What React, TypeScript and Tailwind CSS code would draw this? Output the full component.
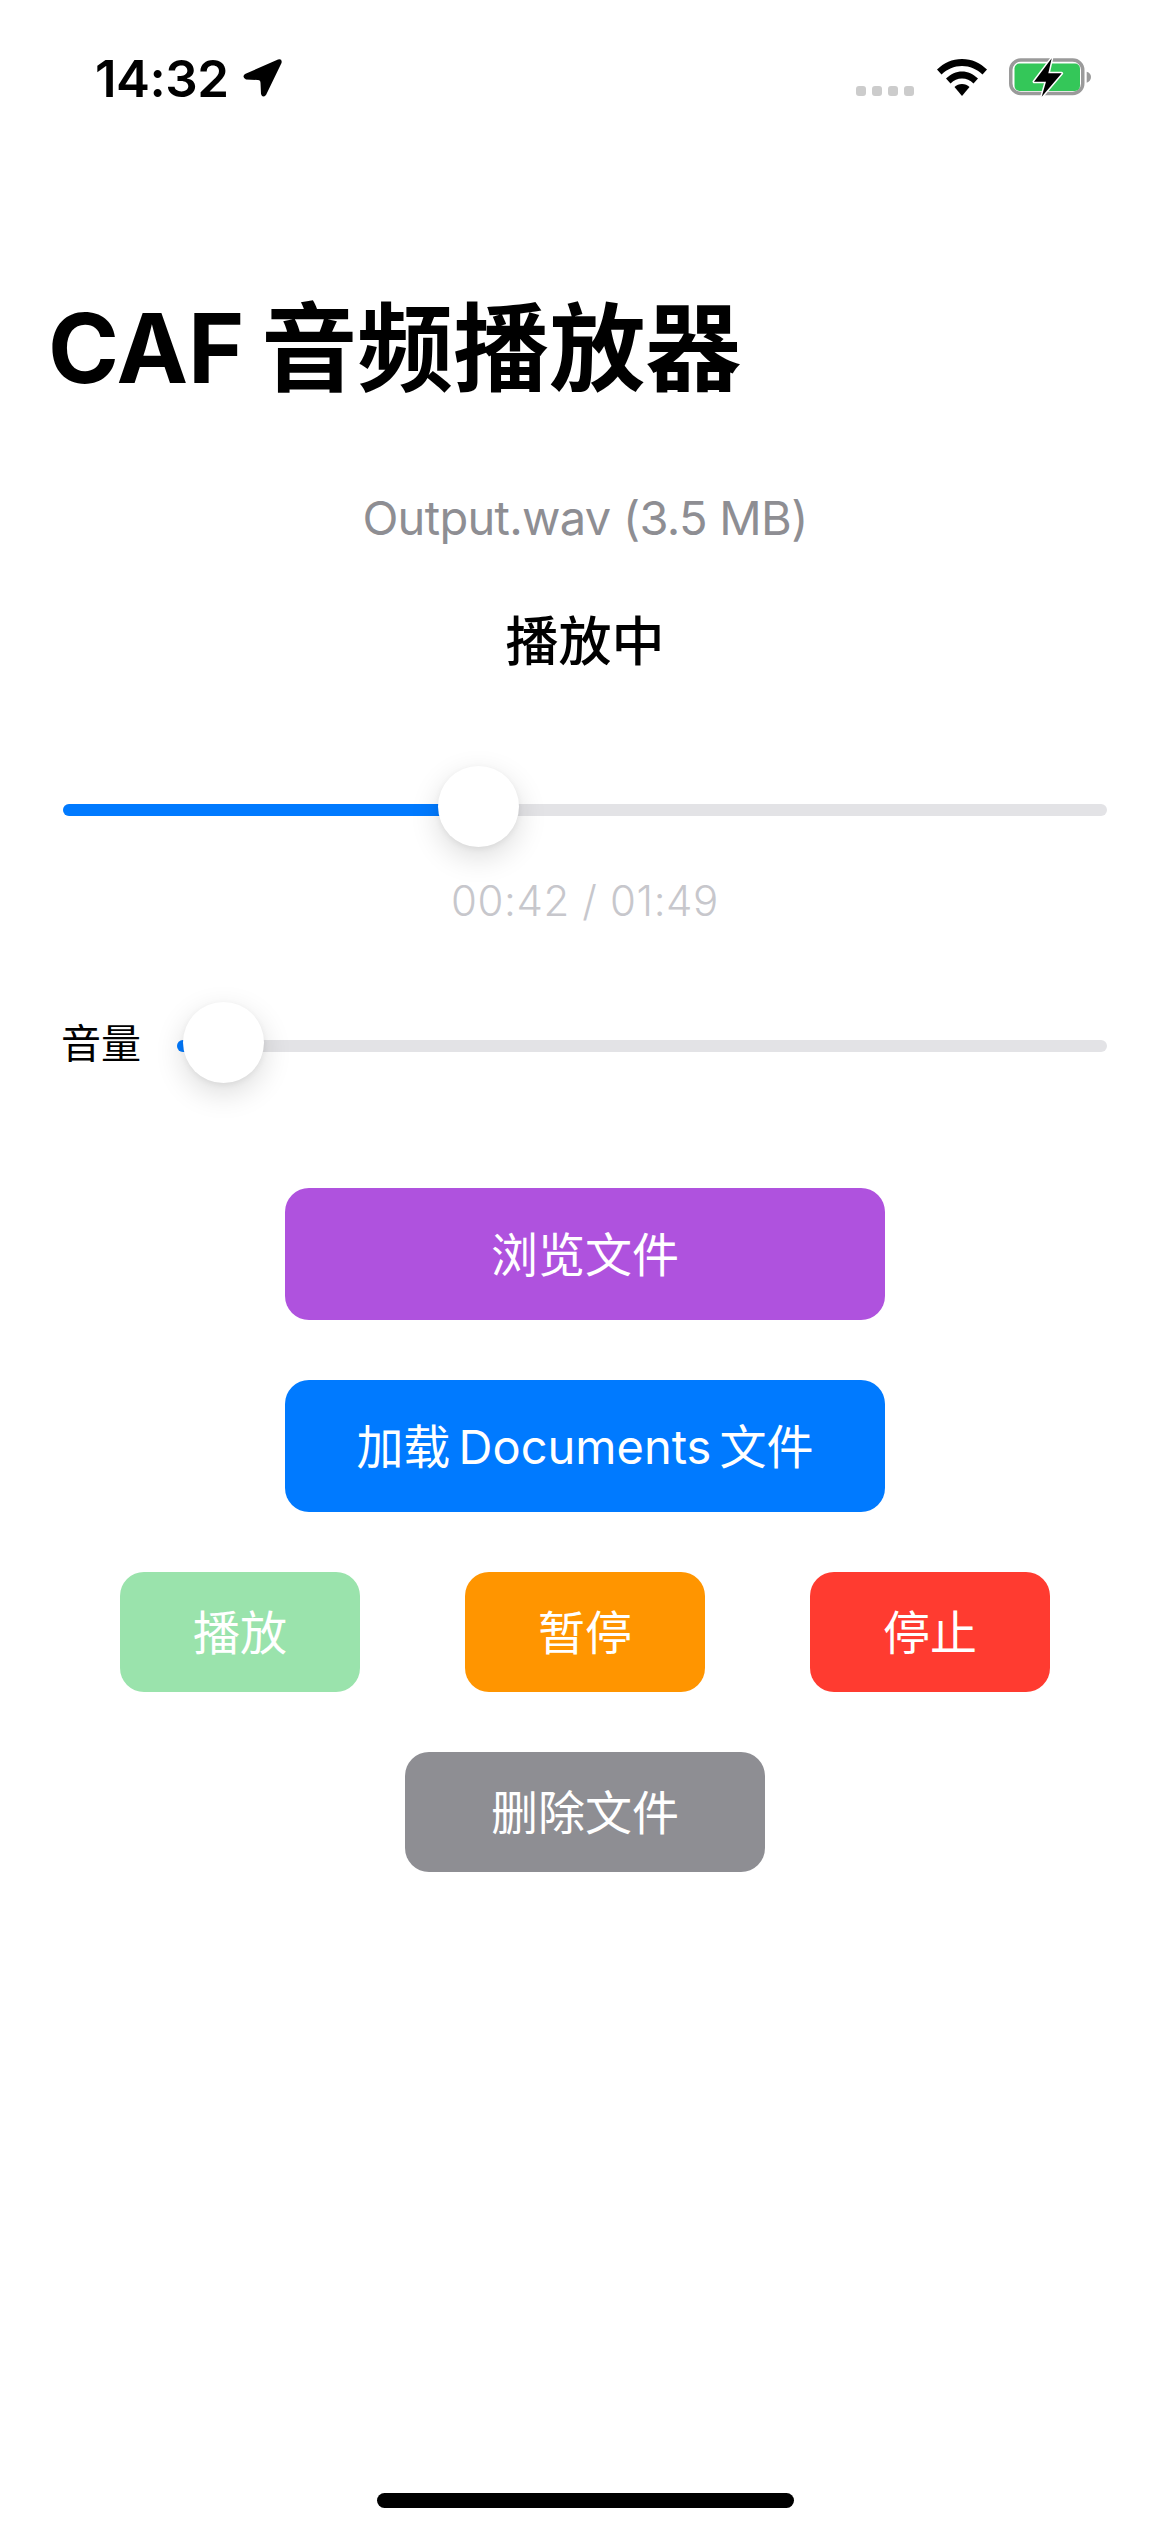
import React from "react";

const font = { fontFamily: '"Inter", "Noto Sans CJK SC", sans-serif' };

function Thumb({ left }: { left: string }) {
  return (
    <div
      className={`absolute top-[-38px] h-[81px] w-[81px] rounded-full bg-white shadow-[0_10px_30px_rgba(0,0,0,0.14),0_2px_6px_rgba(0,0,0,0.06)] ${left}`}
    />
  );
}

function Btn({ label, className }: { label: string; className: string }) {
  return (
    <div
      className={`flex items-center justify-center rounded-[24px] text-[47px] leading-none text-white [word-spacing:-5px] ${className}`}
    >
      {label}
    </div>
  );
}

export default function App() {
  return (
    <div className="flex h-[2532px] w-[1170px] flex-col overflow-hidden bg-white text-black" style={font}>
      <div className="flex h-[132px] shrink-0 items-start justify-between pl-[95px] pr-[77px]">
        <div className="flex items-start gap-[14px] pt-[45px]">
          <span className="text-[51px] font-semibold leading-[68px] tracking-[-0.5px]">14:32</span>
          <svg width="39" height="38" viewBox="0 0 39 38" className="mt-[14px]">
            <path
              d="M35 0.5 Q39.5 -0.5 38.5 4 L23 36 Q19.5 39.5 18 35 L17.5 24 Q17.5 21 15 21 L3 20.5 Q-1.5 18 2 15 Z"
              fill="#000"
            />
          </svg>
        </div>
        <div className="flex items-start pt-[56px]">
          <div className="mr-[23px] mt-[30px] flex gap-[6px]">
            <div className="h-[10px] w-[10px] rounded-[3px] bg-[#cccccc]" />
            <div className="h-[10px] w-[10px] rounded-[3px] bg-[#cccccc]" />
            <div className="h-[10px] w-[10px] rounded-[3px] bg-[#cccccc]" />
            <div className="h-[10px] w-[10px] rounded-[3px] bg-[#cccccc]" />
          </div>
          <svg width="50" height="38" viewBox="0 0 50 38" className="mr-[22px] mt-[3px]">
            <path d="M25 0 C15 0 7 4 0 10.5 L4.5 15.5 C10.5 10 17 7 25 7 C33 7 39.5 10 45.5 15.5 L50 10.5 C43 4 35 0 25 0 Z" fill="#000" />
            <path d="M25 12.5 C19 12.5 14 15 9 19.5 L13.5 24.5 C17 21.3 20.5 19.5 25 19.5 C29.5 19.5 33 21.3 36.5 24.5 L41 19.5 C36 15 31 12.5 25 12.5 Z" fill="#000" />
            <path d="M25 25 C22 25 19.5 26.2 17.5 28 L25 37 L32.5 28 C30.5 26.2 28 25 25 25 Z" fill="#000" />
          </svg>
          <svg width="84" height="44" viewBox="0 0 84 44">
            <rect x="1.75" y="4" width="72" height="33.5" rx="10" fill="none" stroke="#9a9a9a" strokeWidth="3.5" />
            <rect x="5.5" y="7.5" width="65.5" height="27.5" rx="5" fill="#34c759" />
            <path d="M77.7 15.7 C80.5 16.5 82 18.5 82 21 C82 23.5 80.5 25.8 77.7 26.7 Z" fill="#9a9a9a" />
            <path
              d="M42.7 2.3 L25 25.7 L37 25.7 L32.7 40.7 L52.7 17.3 L39.3 17.3 Z"
              fill="#000"
              stroke="#fff"
              strokeWidth="3"
              strokeLinejoin="round"
              paintOrder="stroke"
            />
          </svg>
        </div>
      </div>

      <h1 className="mt-[150px] pl-[48px] text-[96px] font-bold leading-[132px] [word-spacing:-6px]">CAF 音频播放器</h1>

      <div className="mt-[74px] text-center text-[47px] leading-[60px] tracking-[-0.7px] text-[#8e8e93]">
        Output.wav (3.5 MB)
      </div>
      <div className="mt-[61px] text-center text-[53px] font-medium leading-[66px]">播放中</div>

      <div className="relative mx-[63px] mt-[129px] h-[12px] rounded-full bg-[#e3e3e6]">
        <div className="h-full w-[390px] rounded-l-full bg-[#007aff]" />
        <Thumb left="left-[375px]" />
      </div>

      <div className="mt-[59px] text-center text-[42px] font-light leading-[52px] tracking-[0.6px] text-[#c7c7cc]">
        00:42 / 01:49
      </div>

      <div className="mx-[63px] mt-[91px] flex items-center">
        <div className="ml-[-2px] w-[116px] pb-[4px] text-[40px] leading-[52px]">音量</div>
        <div className="relative h-[12px] flex-1 rounded-full bg-[#e3e3e6]">
          <div className="h-full w-[30px] rounded-l-full bg-[#007aff]" />
          <Thumb left="left-[6px]" />
        </div>
      </div>

      <div className="mt-[114px] flex flex-col items-center gap-[60px]">
        <Btn label="浏览文件" className="h-[132px] w-[600px] bg-[#af52de]" />
        <Btn label="加载 Documents 文件" className="h-[132px] w-[600px] bg-[#007aff]" />
        <div className="flex w-full justify-center gap-[105px]">
          <Btn label="播放" className="h-[120px] w-[240px] bg-[#9ae3ac]" />
          <Btn label="暂停" className="h-[120px] w-[240px] bg-[#ff9500]" />
          <Btn label="停止" className="h-[120px] w-[240px] bg-[#ff3b30]" />
        </div>
        <Btn label="删除文件" className="h-[120px] w-[360px] bg-[#8e8e93]" />
      </div>

      <div className="mb-[24px] mt-auto h-[15px] w-[417px] self-center rounded-full bg-black" />
    </div>
  );
}
